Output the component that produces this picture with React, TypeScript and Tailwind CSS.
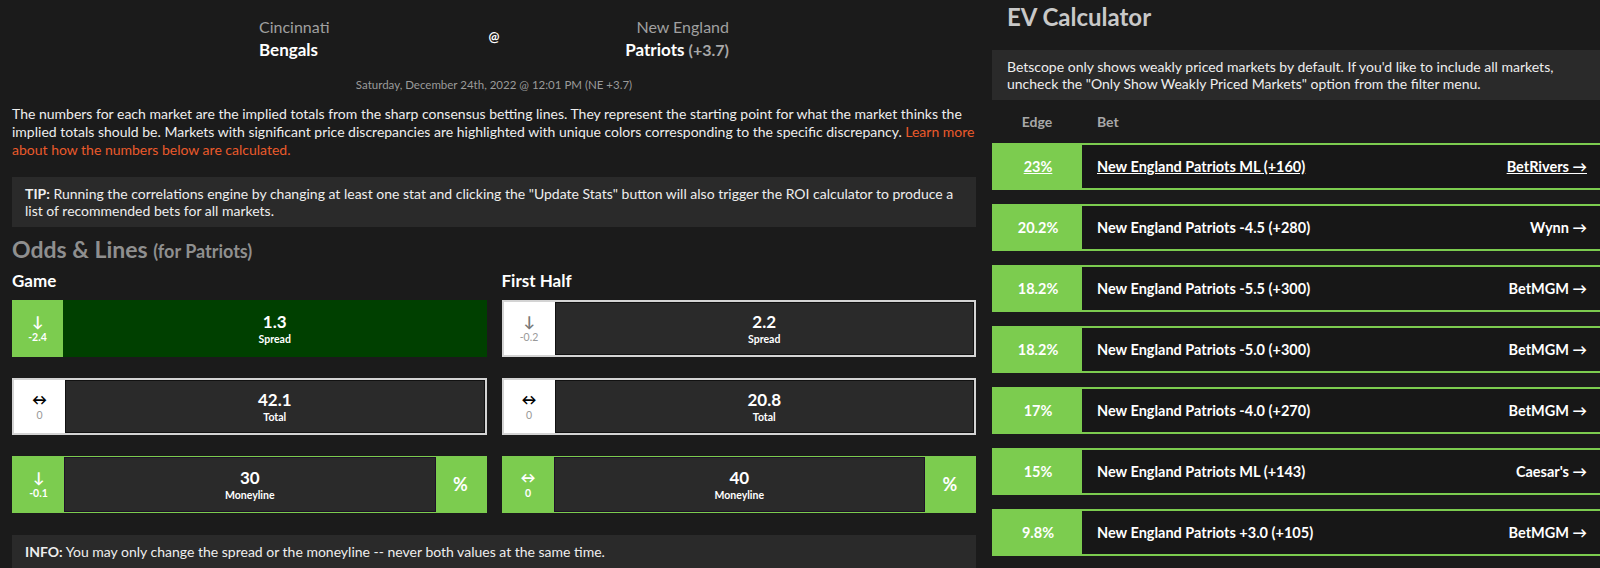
import type { ReactNode } from 'react'

type Bet = { edge: string; bet: string; book: string; link?: boolean }

const bets: Bet[] = [
  { edge: '23%', bet: 'New England Patriots ML (+160)', book: 'BetRivers →', link: true },
  { edge: '20.2%', bet: 'New England Patriots -4.5 (+280)', book: 'Wynn →' },
  { edge: '18.2%', bet: 'New England Patriots -5.5 (+300)', book: 'BetMGM →' },
  { edge: '18.2%', bet: 'New England Patriots -5.0 (+300)', book: 'BetMGM →' },
  { edge: '17%', bet: 'New England Patriots -4.0 (+270)', book: 'BetMGM →' },
  { edge: '15%', bet: 'New England Patriots ML (+143)', book: "Caesar's →" },
  { edge: '9.8%', bet: 'New England Patriots +3.0 (+105)', book: 'BetMGM →' },
]

// Market card: left delta block, centre value, optional % block
function Market({
  variant,
  arrow,
  delta,
  value,
  label,
  percent,
}: {
  variant: 'hot' | 'plain' | 'green'
  arrow: string
  delta: string
  value: string
  label: string
  percent?: boolean
}) {
  const outer =
    variant === 'hot'
      ? ''
      : variant === 'plain'
        ? 'border-2 border-[#d4d4d4]'
        : 'border border-[#7ccc4f]'
  const side = variant === 'plain' ? 'bg-white' : 'bg-[#7ccc4f]'
  const arrowColor =
    variant === 'plain' ? (arrow === '↓' ? 'text-[#777]' : 'text-black') : 'text-white'
  const deltaColor = variant === 'plain' ? 'text-[#999] font-normal' : 'text-white font-bold'
  const main =
    variant === 'hot'
      ? 'bg-[#004000]'
      : variant === 'plain'
        ? 'bg-[#2a2a2a] border border-[#111]'
        : 'bg-[#2a2a2a] border border-[#1e1028]'

  return (
    <div className={`h-[57px] flex ${outer}`}>
      <div className={`w-[51px] shrink-0 flex flex-col items-center justify-center ${side}`}>
        <span className={`text-[15px] leading-[17px] font-bold ${arrowColor}`}>{arrow}</span>
        <span className={`text-[10.5px] leading-[14px] ${deltaColor}`}>{delta}</span>
      </div>
      <div className={`flex-1 flex flex-col items-center justify-center ${main}`}>
        <span className="text-[17px] leading-[20px] font-bold text-white">{value}</span>
        <span className="text-[10.5px] leading-[14px] font-bold text-white">{label}</span>
      </div>
      {percent && (
        <div className="w-[50px] shrink-0 bg-[#7ccc4f] flex items-center justify-center">
          <span className="text-[18px] font-bold text-white">%</span>
        </div>
      )}
    </div>
  )
}

function Note({ label, children }: { label: string; children: ReactNode }) {
  return (
    <div className="bg-[#2a2a2a] pl-[13px] pr-[4px] py-[8px] text-[14px] leading-[17px] text-[#eee]">
      <span className="font-bold">{label}</span> {children}
    </div>
  )
}

export default function App() {
  return (
    <div
      className="h-[568px] w-full overflow-hidden bg-[#1b1b1b] flex"
      style={{ fontFamily: 'Lato, "Noto Sans", sans-serif' }}
    >
      {/* left: matchup + odds */}
      <div className="w-[964px] ml-3 shrink-0">
        <div className="pt-[16px] flex justify-center items-center">
          <div className="w-[210px]">
            <div className="text-[16px] leading-[21px] text-[#a0a0a0]">Cincinnati</div>
            <div className="mt-[2px] text-[17px] leading-[22px] font-bold text-white">Bengals</div>
          </div>
          <div className="w-[50px] text-center text-[13px] font-bold text-white pb-[2px]">@</div>
          <div className="w-[210px] text-right">
            <div className="text-[16px] leading-[21px] text-[#a0a0a0]">New England</div>
            <div className="mt-[2px] text-[17px] leading-[22px] font-bold text-white">
              Patriots <span className="text-[16px] text-[#a8a8a8]">(+3.7)</span>
            </div>
          </div>
        </div>
        <div className="mt-[16px] text-center text-[11.5px] leading-[16px] text-[#9a9a9a]">
          Saturday, December 24th, 2022 @ 12:01 PM (NE +3.7)
        </div>
        <p className="mt-[12px] text-[14px] leading-[18px] text-[#eee]">
          The numbers for each market are the implied totals from the sharp consensus betting lines. They
          represent the starting point for what the market thinks the implied totals should be. Markets with
          significant price discrepancies are highlighted with unique colors corresponding to the specific
          discrepancy. <span className="text-[#ea5a2b]">Learn more about how the numbers below are calculated.</span>
        </p>
        <div className="mt-[18px]">
          <Note label="TIP:">
            Running the correlations engine by changing at least one stat and clicking the "Update Stats" button
            will also trigger the ROI calculator to produce a list of recommended bets for all markets.
          </Note>
        </div>
        <h2 className="mt-[8px] text-[23px] leading-[28px] font-bold text-[#8f8f8f]">
          Odds &amp; Lines <span className="text-[18px]">(for Patriots)</span>
        </h2>
        <div className="mt-[5px] grid grid-cols-2 gap-x-[15px]">
          <div>
            <h3 className="text-[17px] leading-[21px] font-bold text-white">Game</h3>
            <div className="mt-[9px] flex flex-col gap-[21px]">
              <Market variant="hot" arrow="↓" delta="-2.4" value="1.3" label="Spread" />
              <Market variant="plain" arrow="↔" delta="0" value="42.1" label="Total" />
              <Market variant="green" arrow="↓" delta="-0.1" value="30" label="Moneyline" percent />
            </div>
          </div>
          <div>
            <h3 className="text-[17px] leading-[21px] font-bold text-white">First Half</h3>
            <div className="mt-[9px] flex flex-col gap-[21px]">
              <Market variant="plain" arrow="↓" delta="-0.2" value="2.2" label="Spread" />
              <Market variant="plain" arrow="↔" delta="0" value="20.8" label="Total" />
              <Market variant="green" arrow="↔" delta="0" value="40" label="Moneyline" percent />
            </div>
          </div>
        </div>
        <div className="mt-[22px]">
          <Note label="INFO:">You may only change the spread or the moneyline -- never both values at the same time.</Note>
        </div>
      </div>

      {/* right: EV calculator */}
      <div className="w-[680px] ml-[16px] shrink-0">
        <h2 className="pt-[2px] px-[15px] text-[24px] leading-[30px] font-bold text-[#c8c8c8]">EV Calculator</h2>
        <div className="mt-[18px] bg-[#2a2a2a] px-[15px] py-[8px] text-[14px] leading-[17px] text-[#eee]">
          Betscope only shows weakly priced markets by default. If you'd like to include all markets,
          <br />
          uncheck the "Only Show Weakly Priced Markets" option from the filter menu.
        </div>
        <div className="mt-[12px] flex text-[14px] leading-[20px] font-bold text-[#a8a8a8]">
          <div className="w-[90px] text-center">Edge</div>
          <div className="pl-[15px]">Bet</div>
        </div>
        <div className="mt-[11px] flex flex-col gap-[14px]">
          {bets.map((b, i) => (
            <div key={i} className="h-[47px] flex border-2 border-[#7ccc4f] text-[14.5px] font-bold text-white">
              <div
                className={`w-[88px] shrink-0 bg-[#7ccc4f] flex items-center justify-center ${b.link ? 'underline' : ''}`}
              >
                {b.edge}
              </div>
              <div className="flex-1 bg-[#171717] flex items-center justify-between pl-[15px] pr-[83px]">
                <span className={b.link ? 'underline' : ''}>{b.bet}</span>
                <span className={b.link ? 'underline' : ''}>{b.book}</span>
              </div>
            </div>
          ))}
        </div>
      </div>
    </div>
  )
}
